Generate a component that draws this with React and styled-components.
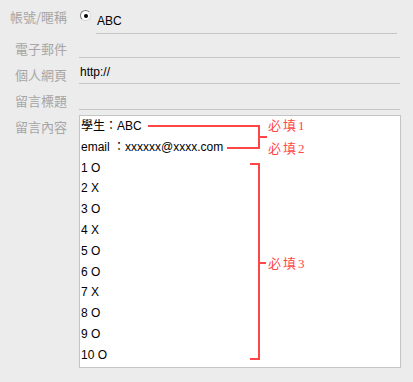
import React from 'react'
import styled, { createGlobalStyle } from 'styled-components'

const GlobalStyle = createGlobalStyle`
  html, body {
    margin: 0;
    padding: 0;
    background: #ececec;
  }
  body {
    min-height: 100vh;
    font-family: "Liberation Sans", Arial, "Noto Sans CJK TC", sans-serif;
  }
`

const Form = styled.div`
  display: grid;
  grid-template-columns: 67px 322px;
  column-gap: 12px;
`

const Label = styled.div`
  font-family: "Noto Sans CJK TC", "Noto Sans", sans-serif;
  font-size: 13px;
  line-height: 16px;
  color: #a6a6a6;
  text-align: right;
  padding-top: ${({ $top }) => $top}px;
  white-space: nowrap;
`

const Field = styled.div`
  height: ${({ $height }) => $height}px;
  box-sizing: border-box;
  margin-right: 1px;
  display: flex;
  align-items: flex-end;
  padding: 0 1px 3px;
  border-bottom: ${({ $plain }) => ($plain ? 'none' : '1px solid #c6c6c6')};
  font-size: 12px;
  line-height: 16px;
  color: #000;
`

const Radio = styled.span`
  align-self: flex-start;
  margin-top: 10px;
  width: 11px;
  height: 11px;
  box-sizing: border-box;
  border-radius: 50%;
  border: 1px solid;
  border-color: #7a7a7a #d8d8d8 #d8d8d8 #7a7a7a;
  background: #fff;
  display: flex;
  align-items: center;
  justify-content: center;

  &::after {
    content: '';
    width: 4px;
    height: 4px;
    border-radius: 50%;
    background: #000;
  }
`

const NickInput = styled.div`
  flex: 1;
  margin: 0 2px -3px 5px;
  padding: 0 1px 4px;
  border-bottom: 1px solid #c6c6c6;
`

const MessageBox = styled.div`
  position: relative;
  margin-top: 5px;
  height: 253px;
  box-sizing: border-box;
  border: 1px solid #c4c4c4;
  background: #fff;
  padding: 0 1px;
  font-size: 12px;
  line-height: 20.8px;
  color: #000;
`

const Line = styled.div`
  white-space: nowrap;
`

const Mark = styled.div`
  position: absolute;
  left: ${({ $left }) => $left}px;
  top: ${({ $top }) => $top}px;
  width: ${({ $w }) => $w || 0}px;
  height: ${({ $h }) => $h || 0}px;
  border-color: #ff4646;
  border-style: solid;
  border-width: ${({ $sides }) => $sides};
`

const Note = styled.div`
  position: absolute;
  left: ${({ $left }) => $left}px;
  top: ${({ $top }) => $top}px;
  font-family: "Liberation Serif", "Noto Sans CJK TC", serif;
  font-size: 13px;
  line-height: 15px;
  letter-spacing: 2px;
  color: #ff4646;
  white-space: nowrap;
`

const answers = ['O', 'X', 'O', 'X', 'O', 'O', 'X', 'O', 'O', 'O']

export default function App() {
  return (
    <>
      <GlobalStyle />
      <Form>
        <Label $top={9}>帳號/暱稱</Label>
        <Field $height={34} $plain>
          <Radio />
          <NickInput>ABC</NickInput>
        </Field>

        <Label $top={7}>電子郵件</Label>
        <Field $height={24} />

        <Label $top={9}>個人網頁</Label>
        <Field $height={26}>http://</Field>

        <Label $top={9}>留言標題</Label>
        <Field $height={26} />

        <Label $top={9}>留言內容</Label>
        <MessageBox>
          <Line>學生：ABC</Line>
          <Line>email ：xxxxxx@xxxx.com</Line>
          {answers.map((a, i) => (
            <Line key={i}>{i + 1} {a}</Line>
          ))}

          <Mark $left={68} $top={9} $w={112} $sides="2px 0 0 0" />
          <Mark $left={147} $top={31} $w={33} $sides="2px 0 0 0" />
          <Mark $left={178} $top={9} $h={22} $sides="0 0 0 2px" />
          <Mark $left={180} $top={20} $w={7} $sides="2px 0 0 0" />
          <Note $left={188} $top={2}>必填1</Note>
          <Note $left={188} $top={25}>必填2</Note>

          <Mark $left={170} $top={47} $w={8} $h={193} $sides="2px 2px 2px 0" />
          <Mark $left={180} $top={146} $w={6} $sides="2px 0 0 0" />
          <Note $left={188} $top={140}>必填3</Note>
        </MessageBox>
      </Form>
    </>
  )
}
